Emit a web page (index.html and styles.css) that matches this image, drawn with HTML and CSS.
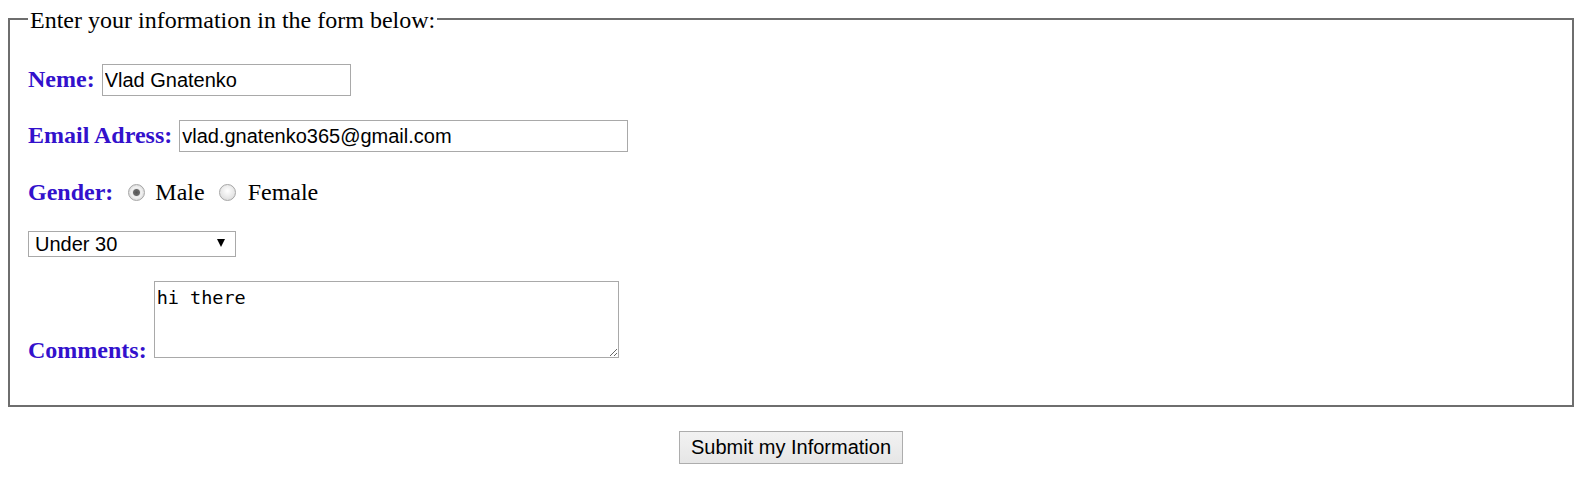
FILE: index.html
```html
<!DOCTYPE html>
<html>
<head>
<meta charset="utf-8">
<title>Form</title>
<link rel="stylesheet" href="styles.css">
</head>
<body>
<form class="info-form">
  <fieldset class="box">
    <legend class="box-title">Enter your information in the form below:</legend>
    <p class="row">
      <label class="lbl" for="name">Neme:</label> <input class="field field-name" id="name" type="text" value="Vlad Gnatenko">
    </p>
    <p class="row">
      <label class="lbl" for="email">Email Adress:</label> <input class="field field-email" id="email" type="text" value="vlad.gnatenko365@gmail.com">
    </p>
    <p class="row row-gender">
      <label class="lbl lbl-gender">Gender:</label> <input class="radio" type="radio" name="g" checked> Male <input class="radio radio-second" type="radio" name="g"> Female
    </p>
    <p class="row">
      <span class="select-wrap"><select class="select"><option>Under 30</option><option>30 and over</option></select></span>
    </p>
    <p class="row">
      <label class="lbl" for="comments">Comments:</label> <textarea class="area" id="comments">hi there</textarea>
    </p>
  </fieldset>
  <div class="actions">
    <button class="btn" type="button">Submit my Information</button>
  </div>
</form>
</body>
</html>
```

FILE: styles.css
```css
html, body {
  background: #ffffff;
}
body {
  margin: 3px 8px 8px 8px;
  font-family: "Liberation Serif", "Times New Roman", serif;
  color: #000;
}
.box {
  margin: 0;
  padding: 6px 18px 17px 18px;
  border: 2px solid #6e6e6e;
  font-size: 24px;
}
.box-title {
  padding: 4px 2px 0 2px;
  font-size: 24px;
}
.row {
  margin: 24px 0;
}
.row-gender {
  padding-top: 3px;
}
.lbl {
  color: #3311cc;
  font-weight: bold;
}
.lbl-gender {
  margin-right: 2px;
}
.field {
  box-sizing: border-box;
  height: 32px;
  margin: 0 0 0 1px;
  padding: 1px 2px;
  border: 1px solid #a9a9a9;
  font-family: "Liberation Sans", Arial, sans-serif;
  font-size: 20px;
  color: #000;
  background: #fff;
}
.field-name {
  width: 249px;
}
.field-email {
  width: 449px;
}
.radio {
  appearance: none;
  -webkit-appearance: none;
  box-sizing: border-box;
  width: 17px;
  height: 17px;
  margin: 0 4px 0 7px;
  border: 1px solid #a6a6a6;
  border-radius: 50%;
  background: radial-gradient(circle at 50% 40%, #ffffff 0%, #e6e6e6 60%, #d2d2d2 100%);
  vertical-align: -1px;
}
.radio-second {
  margin: 0 6px 0 8px;
}
.radio:checked {
  background: radial-gradient(circle, #555555 0, #6a6a6a 3px, #e9e9e9 4px, #f2f2f2 5px, #dadada 8px);
}
.select-wrap {
  position: relative;
  display: inline-block;
}
.select-wrap::after {
  content: "";
  position: absolute;
  right: 11px;
  top: 9px;
  width: 0;
  height: 0;
  border-left: 4px solid transparent;
  border-right: 4px solid transparent;
  border-top: 8px solid #000;
  pointer-events: none;
}
.select {
  appearance: none;
  -webkit-appearance: none;
  box-sizing: border-box;
  width: 208px;
  height: 26px;
  margin: 0;
  padding: 0 0 0 6px;
  border: 1px solid #a9a9a9;
  border-radius: 0;
  background: #fff;
  font-family: "Liberation Sans", Arial, sans-serif;
  font-size: 20px;
  color: #000;
}
.area {
  box-sizing: border-box;
  width: 465px;
  height: 77px;
  margin: 0 0 0 1px;
  padding: 5px 2px 2px 2px;
  border: 1px solid #a9a9a9;
  font-family: "DejaVu Sans Mono", "Liberation Mono", monospace;
  font-size: 18.5px;
  color: #000;
  background: #fff;
  resize: both;
}
.actions {
  margin-top: 24px;
  text-align: center;
}
.btn {
  box-sizing: border-box;
  height: 33px;
  padding: 1px 11px;
  border: 1px solid #adadad;
  background: linear-gradient(#f2f2f2, #e6e6e6);
  font-family: "Liberation Sans", Arial, sans-serif;
  font-size: 20px;
  color: #000;
}
```
